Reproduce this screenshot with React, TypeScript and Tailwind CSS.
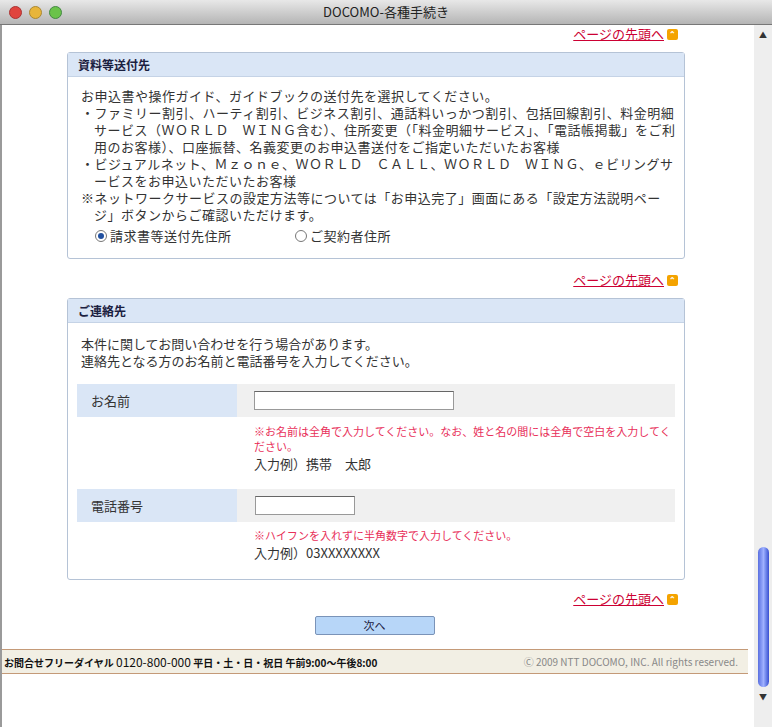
const font = { fontFamily: '"Noto Sans CJK JP", "Liberation Sans", sans-serif' };

function TopLink() {
  return (
    <div className="flex justify-end items-center gap-[3px] pr-[76px]">
      <a className="text-[13px] leading-[16px] text-[#cc0033] underline">ページの先頭へ</a>
      <span className="w-[11px] h-[11px] bg-[#f4a300] rounded-[2px] flex items-center justify-center text-[8px] leading-none text-white font-bold">⌃</span>
    </div>
  );
}

function Box({ title, children }: { title: string; children: React.ReactNode }) {
  return (
    <div className="ml-[65px] w-[618px] border border-[#b5c3d6] rounded-[3px]">
      <div className="h-[24px] bg-[#dae6f6] border-b border-[#c5d3e6] px-[10px] flex items-center text-[12px] font-bold text-[#1a2040]">{title}</div>
      {children}
    </div>
  );
}

function Radio({ on, label }: { on?: boolean; label: string }) {
  return (
    <label className="flex items-center gap-[3px]">
      <span className="w-[12px] h-[12px] rounded-full border border-[#777] bg-white flex items-center justify-center">
        {on && <span className="w-[6px] h-[6px] rounded-full bg-[#2050a0]" />}
      </span>
      {label}
    </label>
  );
}

export default function App() {
  return (
    <div className="w-[772px] h-[727px] bg-[#9a9a9a] overflow-hidden text-[#333]" style={font}>
      <div className="h-[25px] bg-gradient-to-b from-[#e8e8e8] to-[#b5b5b5] border-b border-[#777] flex items-center relative">
        <div className="flex gap-[7px] pl-[9px]">
          <span className="w-[13px] h-[13px] rounded-full bg-[#e0443e] border border-[#a33]" />
          <span className="w-[13px] h-[13px] rounded-full bg-[#e8b53a] border border-[#a83]" />
          <span className="w-[13px] h-[13px] rounded-full bg-[#6ac34a] border border-[#484]" />
        </div>
        <div className="absolute inset-0 flex items-center justify-center text-[13px] text-[#222]">DOCOMO-各種手続き</div>
      </div>
      <div className="flex h-[702px]">
        <div className="w-[752px] ml-[2px] bg-white flex flex-col">
          <div className="pt-[1px]"><TopLink /></div>
          <div className="mt-[10px]">
            <Box title="資料等送付先">
              <div className="pl-[13px] pr-[8px] pt-[10px] pb-[14px] text-[13px] leading-[17px] tracking-[0.5px]">
                <p>お申込書や操作ガイド、ガイドブックの送付先を選択してください。</p>
                <p className="pl-[13px] -indent-[13px]">・ファミリー割引、ハーティ割引、ビジネス割引、通話料いっかつ割引、包括回線割引、料金明細サービス（ＷＯＲＬＤ　ＷＩＮＧ含む）、住所変更（「料金明細サービス」、「電話帳掲載」をご利用のお客様）、口座振替、名義変更のお申込書送付をご指定いただいたお客様</p>
                <p className="pl-[13px] -indent-[13px]">・ビジュアルネット、Ｍｚｏｎｅ、ＷＯＲＬＤ　ＣＡＬＬ、ＷＯＲＬＤ　ＷＩＮＧ、ｅビリングサービスをお申込いただいたお客様</p>
                <p className="pl-[13px] -indent-[13px]">※ネットワークサービスの設定方法等については「お申込完了」画面にある「設定方法説明ページ」ボタンからご確認いただけます。</p>
                <div className="flex pl-[14px] mt-[4px]">
                  <div className="w-[200px]"><Radio on label="請求書等送付先住所" /></div>
                  <Radio label="ご契約者住所" />
                </div>
              </div>
            </Box>
          </div>
          <div className="mt-[13px]"><TopLink /></div>
          <div className="mt-[10px]">
            <Box title="ご連絡先">
              <div className="pt-[12px] pb-[18px] text-[13px] leading-[17px]">
                <p className="px-[13px]">本件に関してお問い合わせを行う場合があります。<br />連絡先となる方のお名前と電話番号を入力してください。</p>
                <div className="mx-[9px] mt-[15px]">
                  <div className="flex h-[33px]">
                    <div className="w-[160px] bg-[#dae6f6] pl-[14px] flex items-center">お名前</div>
                    <div className="flex-1 bg-[#f0f0f0] pl-[17px] flex items-center">
                      <div className="w-[200px] h-[19px] bg-white border border-[#999] border-t-[#666]" />
                    </div>
                  </div>
                  <div className="pl-[177px] pt-[7px] pb-[17px]">
                    <p className="text-[11px] leading-[15px] text-[#e8305a]">※お名前は全角で入力してください。なお、姓と名の間には全角で空白を入力してください。</p>
                    <p className="mt-[1px]">入力例）携帯　太郎</p>
                  </div>
                  <div className="flex h-[33px]">
                    <div className="w-[160px] bg-[#dae6f6] pl-[14px] flex items-center">電話番号</div>
                    <div className="flex-1 bg-[#f0f0f0] pl-[18px] flex items-center">
                      <div className="w-[100px] h-[19px] bg-white border border-[#999] border-t-[#666]" />
                    </div>
                  </div>
                  <div className="pl-[177px] pt-[6px]">
                    <p className="text-[11px] leading-[15px] text-[#e8305a]">※ハイフンを入れずに半角数字で入力してください。</p>
                    <p className="mt-[1px]">入力例）03XXXXXXXX</p>
                  </div>
                </div>
              </div>
            </Box>
          </div>
          <div className="mt-[11px]"><TopLink /></div>
          <div className="flex justify-center mt-[9px]">
            <button className="w-[120px] h-[19px] bg-[#b7d6f8] border border-[#7a93b8] rounded-[2px] text-[11px] text-[#1a2040] ml-[-7px]">次へ</button>
          </div>
          <div className="mt-[14px] h-[25px] w-[746px] bg-[#f2efe4] border-y border-[#c49a78] flex items-center justify-between px-[2px]">
            <span className="text-[10px] font-bold text-[#111]">お問合せフリーダイヤル <span className="text-[12px] font-normal">0120-800-000</span> 平日・土・日・祝日 午前9:00〜午後8:00</span>
            <span className="text-[10px] text-[#888] pr-[8px]">Ⓒ 2009 NTT DOCOMO, INC. All rights reserved.</span>
          </div>
        </div>
        <div className="w-[18px] bg-[#eee] flex flex-col items-center justify-between py-[4px]">
          <span className="text-[8px] text-[#333]">▲</span>
          <div className="flex-1" />
          <div className="w-[11px] h-[140px] rounded-full bg-gradient-to-r from-[#5a6fe0] via-[#9fb0ff] to-[#3b4ed0] mb-[4px]" />
          <span className="text-[8px] text-[#333] mb-[20px]">▼</span>
        </div>
      </div>
    </div>
  );
}
